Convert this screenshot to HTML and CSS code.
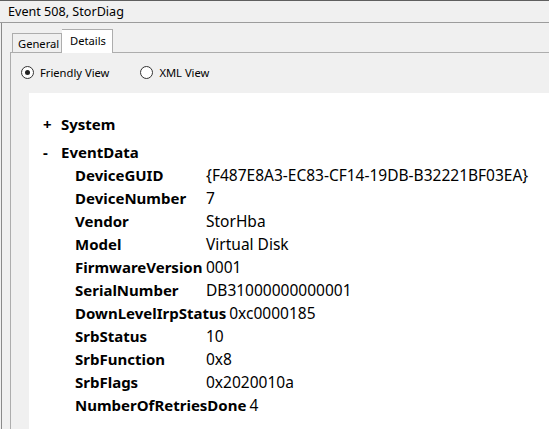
FILE: index.html
```html
<!DOCTYPE html>
<html>
<head>
<meta charset="utf-8">
<link rel="stylesheet" href="styles.css">
</head>
<body>
<div class="window">
  <div class="titlebar">Event 508, StorDiag</div>
  <div class="client">
    <div class="tabs">
      <div class="tab">General</div>
      <div class="tab active">Details</div>
    </div>
    <div class="panel">
      <div class="views">
        <label class="radio"><span class="circle checked"></span>Friendly View</label>
        <label class="radio"><span class="circle"></span>XML View</label>
      </div>
      <div class="doc">
        <div class="node"><span class="toggle">+</span><span class="nodename">System</span></div>
        <div class="node open"><span class="toggle">-</span><span class="nodename">EventData</span></div>
        <div class="rows">
          <div class="row"><span class="key">DeviceGUID</span><span class="val">{F487E8A3-EC83-CF14-19DB-B32221BF03EA}</span></div>
          <div class="row"><span class="key">DeviceNumber</span><span class="val">7</span></div>
          <div class="row"><span class="key">Vendor</span><span class="val">StorHba</span></div>
          <div class="row"><span class="key">Model</span><span class="val">Virtual Disk</span></div>
          <div class="row"><span class="key">FirmwareVersion</span><span class="val">0001</span></div>
          <div class="row"><span class="key">SerialNumber</span><span class="val">DB31000000000001</span></div>
          <div class="row"><span class="key">DownLevelIrpStatus</span><span class="val">0xc0000185</span></div>
          <div class="row"><span class="key">SrbStatus</span><span class="val">10</span></div>
          <div class="row"><span class="key">SrbFunction</span><span class="val">0x8</span></div>
          <div class="row"><span class="key">SrbFlags</span><span class="val">0x2020010a</span></div>
          <div class="row"><span class="key">NumberOfRetriesDone</span><span class="val">4</span></div>
        </div>
      </div>
    </div>
  </div>
</div>
</body>
</html>
```
FILE: styles.css
```css
html, body {
  margin: 0;
  padding: 0;
  background: #f0f0f0;
  font-family: "Segoe UI", "Noto Sans", "Open Sans", sans-serif;
  color: #000;
  overflow: hidden;
}
.window {
  width: 549px;
  height: 429px;
  border-top: 1px solid #5f5f5f;
  box-sizing: border-box;
  display: flex;
  flex-direction: column;
}
.titlebar {
  height: 22px;
  line-height: 21px;
  font-size: 12.6px;
  padding-left: 8px;
  border-bottom: 1px solid #9c9c9c;
  box-sizing: border-box;
}
.client {
  flex: 1;
  border-left: 1px solid #8a8a8a;
  margin-left: 1px;
  display: flex;
  flex-direction: column;
  padding-left: 8px;
}
.tabs {
  display: flex;
  align-items: flex-end;
  height: 29px;
  padding-left: 2px;
}
.tab {
  font-size: 11.2px;
  width: 50px;
  height: 20px;
  line-height: 19px;
  padding-left: 5px;
  border: 1px solid #adadad;
  border-bottom: none;
  box-sizing: border-box;
  background: #f0f0f0;
  margin-bottom: -1px;
  white-space: nowrap;
  overflow: hidden;
}
.tab.active {
  width: 51px;
  height: 24px;
  line-height: 21px;
  background: #fff;
  border-left: none;
  padding-left: 8px;
  position: relative;
  z-index: 1;
}
.panel {
  flex: 1;
  border-top: 1px solid #adadad;
  border-left: 1px solid #adadad;
  display: flex;
  flex-direction: column;
}
.views {
  display: flex;
  height: 40px;
  align-items: center;
  padding-left: 10px;
  padding-bottom: 1px;
  box-sizing: border-box;
  font-size: 11.2px;
}
.radio {
  display: flex;
  align-items: center;
  margin-right: 31px;
}
.circle {
  width: 11px;
  height: 11px;
  border: 1px solid #333;
  border-radius: 50%;
  background: #fff;
  margin-right: 6px;
  position: relative;
}
.circle.checked::after {
  content: "";
  position: absolute;
  left: 3px;
  top: 3px;
  width: 5px;
  height: 5px;
  border-radius: 50%;
  background: #222;
}
.doc {
  flex: 1;
  background: #fff;
  margin-left: 18px;
  padding-top: 19px;
  padding-left: 14px;
}
.node {
  display: flex;
  height: 24px;
  line-height: 24px;
  font-size: 15px;
  font-weight: bold;
}
.node.open {
  margin-top: 4px;
}
.toggle {
  width: 18px;
}
.rows {
  padding-left: 32px;
  font-size: 15px;
}
.row {
  display: flex;
  height: 23px;
  line-height: 23px;
  white-space: nowrap;
}
.key {
  font-weight: bold;
  min-width: 131px;
  padding-right: 3px;
  box-sizing: border-box;
}
.val {
  font-size: 15.5px;
}
```
